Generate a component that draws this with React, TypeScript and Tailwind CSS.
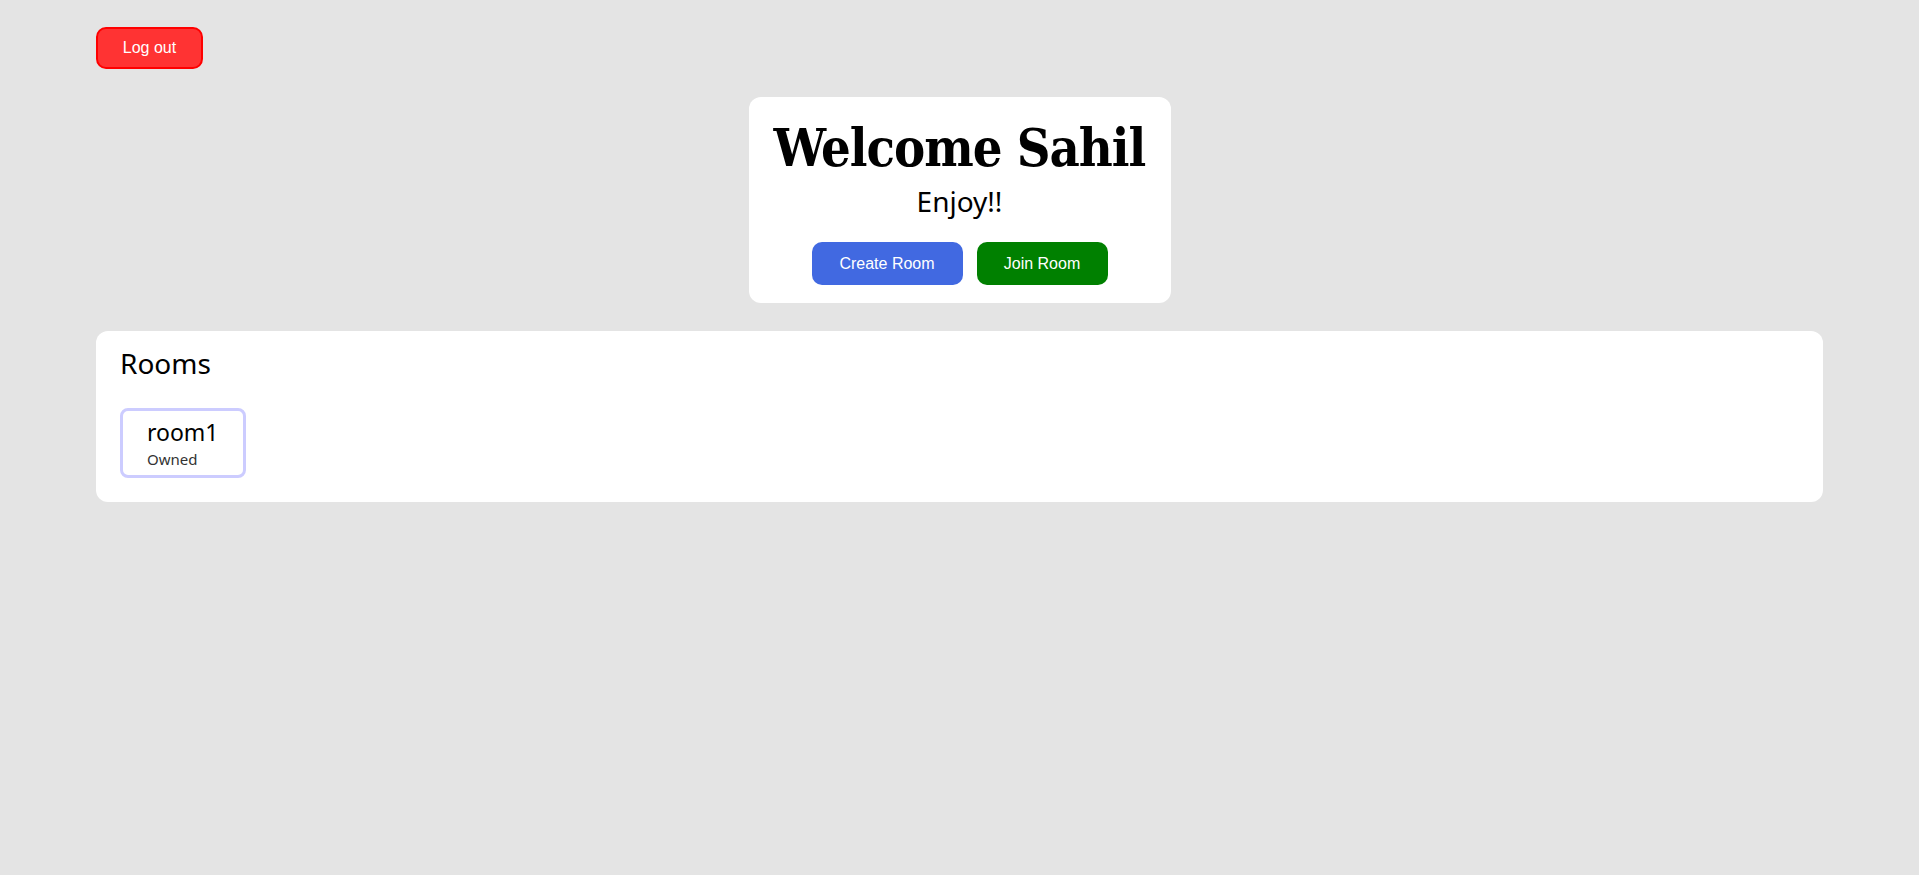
import React from "react";

export default function App() {
  return (
    <div className="min-h-screen w-full bg-[#e4e4e4] pt-[27px]" style={{ fontFamily: '"Noto Sans", sans-serif' }}>
      <div className="px-[96px]">
        <button className="h-[42px] w-[107px] rounded-[10px] border-2 border-[#ff0000] bg-[#ff3333] text-[16px] text-white font-['Liberation_Sans',Arial,sans-serif]">
          Log out
        </button>
      </div>

      <div className="mt-[28px] flex justify-center">
        <div className="flex w-[422px] flex-col items-center rounded-[12px] bg-white pt-[16px] pb-[18px]">
          <h1 className="whitespace-nowrap text-[52px] font-bold font-stretch-condensed tracking-[-1px] leading-[69px] text-black font-['DejaVu_Serif',serif]">
            Welcome Sahil
          </h1>
          <p className="text-[28px] leading-[38px] text-black">Enjoy!!</p>
          <div className="mt-[22px] flex gap-[14px] font-['Liberation_Sans',Arial,sans-serif]">
            <button className="h-[43px] w-[151px] rounded-[10px] bg-[#4169e1] text-[16px] text-white">
              Create Room
            </button>
            <button className="h-[43px] w-[131px] rounded-[10px] bg-[#008000] text-[16px] text-white">
              Join Room
            </button>
          </div>
        </div>
      </div>

      <div className="mx-[96px] mt-[28px] rounded-[12px] bg-white px-[24px] pt-[13px] pb-[24px]">
        <h2 className="text-[28px] leading-[38px] text-black">Rooms</h2>
        <div className="mt-[26px] flex">
          <div className="w-[126px] rounded-[8px] border-[3px] border-[#ccccff] pl-[24px] pt-[6px] pb-[6px]">
            <div className="text-[23px] leading-[31px] text-black">room1</div>
            <div className="mt-[1px] text-[15px] leading-[20px] text-[#333333]">Owned</div>
          </div>
        </div>
      </div>
    </div>
  );
}
